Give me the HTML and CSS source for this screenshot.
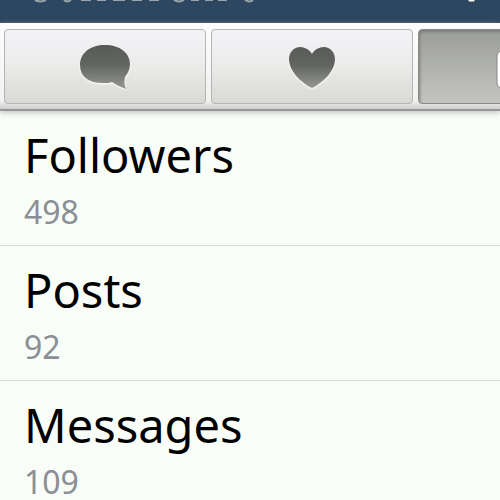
FILE: index.html
```
<!DOCTYPE html>
<html lang="en">
<head>
  <meta charset="UTF-8">
  <meta name="viewport" content="width=device-width, initial-scale=1.0">
  <title>Blog</title>
  <link rel="stylesheet" href="styles.css">
</head>
<body>
  <header class="header">
    <svg class="title-edge" width="226" height="3" viewBox="0 0 226 3" aria-hidden="true">
      <path d="M4 0q6 3 11 0M33 0q3 3 7 0M50 0h10M66 0h9M82 0h12M101 0h10M118 0h10M143 0q5 3 10 0M160 0h8M174 0h8M187 0h9M214 0q5 3 8 0" />
    </svg>
    <svg class="menu-edge" width="8" height="3" viewBox="0 0 8 3" aria-hidden="true">
      <path d="M1 0h5v1h-5z" />
    </svg>
  </header>

  <!-- Tab Bar -->
  <nav class="tab-bar">
    <button class="tab" type="button" aria-label="Messages">
      <svg class="icon" width="56" height="52" viewBox="0 0 56 52">
        <defs>
          <linearGradient id="icon-fill" x1="0" y1="0" x2="0" y2="1">
            <stop offset="0" stop-color="#585a58" />
            <stop offset="0.45" stop-color="#636563" />
            <stop offset="1" stop-color="#969896" />
          </linearGradient>
        </defs>
        <path d="M28 4C13 4 3 12 3 24c0 12 9 18 23 18 4 0 7 0 9-1 4 3 9 5 14 7-2-4-2-8-1-12 3-4 5-8 5-13C53 12 43 4 28 4z" />
      </svg>
    </button>
    <button class="tab" type="button" aria-label="Likes">
      <svg class="icon" width="56" height="52" viewBox="0 0 56 52">
        <path d="M28 47C19 43 5 31 5 18 5 11 10 6 16 6c5 0 10 3 12 7 2-4 7-7 12-7 6 0 11 5 11 12 0 13-14 25-23 29z" />
      </svg>
    </button>
    <button class="tab active" type="button" aria-label="Blog">
      <svg class="icon-blog" width="46" height="44" viewBox="0 0 46 44">
        <rect x="1" y="6" width="44" height="37" rx="5" />
      </svg>
    </button>
  </nav>

  <!-- Stats List -->
  <main class="stats">
    <section class="stat">
      <h2>Followers</h2>
      <p>498</p>
    </section>
    <section class="stat">
      <h2>Posts</h2>
      <p>92</p>
    </section>
    <section class="stat">
      <h2>Messages</h2>
      <p>109</p>
    </section>
  </main>
</body>
</html>
```
FILE: styles.css
```
body {
  font-family: "Noto Sans", "Open Sans", sans-serif;
  background-color: #f9fdf8;
  color: #000;
  margin: 0;
  overflow: hidden;
}

.header {
  display: flex;
  justify-content: space-between;
  height: 23px;
  padding: 0 24px 0 31px;
  background-color: #2d4760;
}

.title-edge {
  fill: none;
  stroke: #9aa4ac;
  stroke-width: 2;
}

.menu-edge {
  fill: #fff;
  stroke: #fff;
}

.tab-bar {
  display: flex;
  gap: 5px;
  padding: 6px 4px 5px;
  background: linear-gradient(#fdfdfd, #f2f2f2 90%, #cecece);
  border-bottom: 2px solid #969896;
  box-shadow: 0 2px 5px #c4c6c4;
  overflow: hidden;
}

.tab {
  display: flex;
  flex: 0 0 202px;
  align-items: center;
  justify-content: center;
  box-sizing: border-box;
  height: 75px;
  padding: 0;
  background: linear-gradient(#f4f2f7, #eaebe9 50%, #d9dad6);
  border: 1px solid #b4b5b0;
  border-radius: 4px;
  cursor: pointer;
}

.tab.active {
  background: linear-gradient(#9c9e9b, #c4c5c1);
  border-color: #8a8c88;
  box-shadow: inset 1px 2px 3px #7c7e7a;
}

.icon {
  fill: url(#icon-fill);
  filter: drop-shadow(0 1px 1px #fff);
}

.icon-blog {
  fill: #fff;
  stroke: #858783;
}

.stat {
  box-sizing: border-box;
  height: 135px;
  padding: 14px 24px 0;
  border-bottom: 1px solid #d8dad7;
}

.stat h2 {
  margin: 0;
  font-size: 47px;
  font-weight: 400;
  line-height: 60px;
}

.stat p {
  margin: 0;
  color: #8b8f95;
  font-size: 32px;
  line-height: 54px;
}
```
